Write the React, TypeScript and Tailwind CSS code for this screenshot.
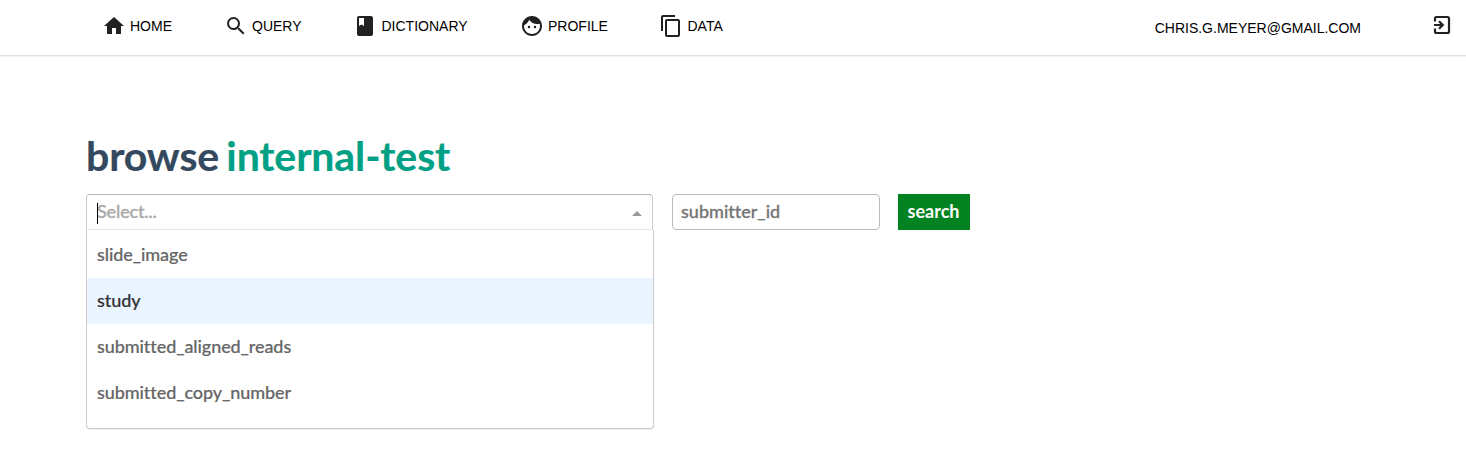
import { MdHome, MdSearch, MdBook, MdFace, MdContentCopy } from "react-icons/md";
import type { IconType } from "react-icons";

function NavItem({ icon: Icon, label, className }: { icon: IconType; label: string; className: string }) {
  return (
    <a className={`flex items-center gap-[4.5px] ${className}`}>
      <Icon size={24} className="text-[#212121]" />
      <span className="w-max">{label}</span>
    </a>
  );
}

function ExitIcon() {
  return (
    <svg width="18" height="20" viewBox="0 0 18 20" fill="none" stroke="#212121" strokeWidth="2.2" className="mr-[15px] mt-[15px]">
      <path d="M2 6.5V3.5Q2 2 3.5 2H14.5Q16 2 16 3.5V16.5Q16 18 14.5 18H3.5Q2 18 2 16.5V13.5" />
      <path d="M1 10H9.5M6 6.2L9.8 10L6 13.8" />
    </svg>
  );
}

const options = ["slide_image", "study", "submitted_aligned_reads", "submitted_copy_number"];

export default function App() {
  return (
    <div className="h-[452px] overflow-hidden bg-white font-['Lato',sans-serif] text-[18px] font-medium [font-variant-ligatures:none] [-webkit-text-stroke:0.2px]">
      <nav className="flex h-14 border-b border-[#e0e0e0] pl-[101.5px] font-['Liberation_Sans',sans-serif] text-[14px] font-normal text-black shadow-[0_1px_1px_#f3f3f3] [-webkit-text-stroke:0]">
        <div className="flex h-[52px] flex-1">
          <NavItem icon={MdHome} label="HOME" className="w-[122px]" />
          <NavItem icon={MdSearch} label="QUERY" className="w-[129.5px]" />
          <NavItem icon={MdBook} label="DICTIONARY" className="w-[166.5px]" />
          <NavItem icon={MdFace} label="PROFILE" className="w-[139.5px]" />
          <NavItem icon={MdContentCopy} label="DATA" className="w-[100px]" />
        </div>
        <span className="mr-[72px] pt-[18px]">CHRIS.G.MEYER@GMAIL.COM</span>
        <ExitIcon />
      </nav>
      <main className="pl-[86px] pt-[75px]">
        <h1 className="h-[63px] text-[41px] leading-[50px] font-bold tracking-[-0.1px] text-[#34495e] [word-spacing:-2.7px]">
          browse <span className="text-[#00a085]">internal-test</span>
        </h1>
        <div className="flex items-start">
          <div className="w-[568px]">
            <div className="flex h-9 w-[567px] items-center justify-between rounded-t border border-[#ccc] border-t-[#b3b3b3] border-b-[#e6e6e6] px-2.5 text-[#aaa]">
              <span className="relative -top-px tracking-[-0.15px] [-webkit-text-stroke:0.35px]">
                Select...
                <i className="absolute left-0 top-[5px] h-[21px] w-px bg-black" />
              </span>
              <span className="mt-[2px] border-x-[5px] border-b-[5px] border-x-transparent border-b-[#999]" />
            </div>
            <ul className="h-[199px] overflow-hidden rounded-b border border-t-0 border-[#ccc] pt-[2px] text-[#666] shadow-[0_1px_0_rgba(0,0,0,0.06)]">
              {options.map((o) => (
                <li key={o} className={`flex h-[46px] items-center px-2.5 pb-[2px] tracking-[-0.08px] ${o === "study" ? "bg-[#ebf5ff] text-[#333]" : ""}`}>{o}</li>
              ))}
            </ul>
          </div>
          <div className="ml-[18px] flex h-9 w-[208px] items-center rounded border border-[#bbb] px-2 pb-[2px] text-[#757575] [-webkit-text-stroke:0.3px]">submitter_id</div>
          <button className="ml-[18px] h-9 w-[72px] bg-[#028220] pr-px pb-[2px] font-bold text-white [-webkit-text-stroke:0]">search</button>
        </div>
      </main>
    </div>
  );
}
